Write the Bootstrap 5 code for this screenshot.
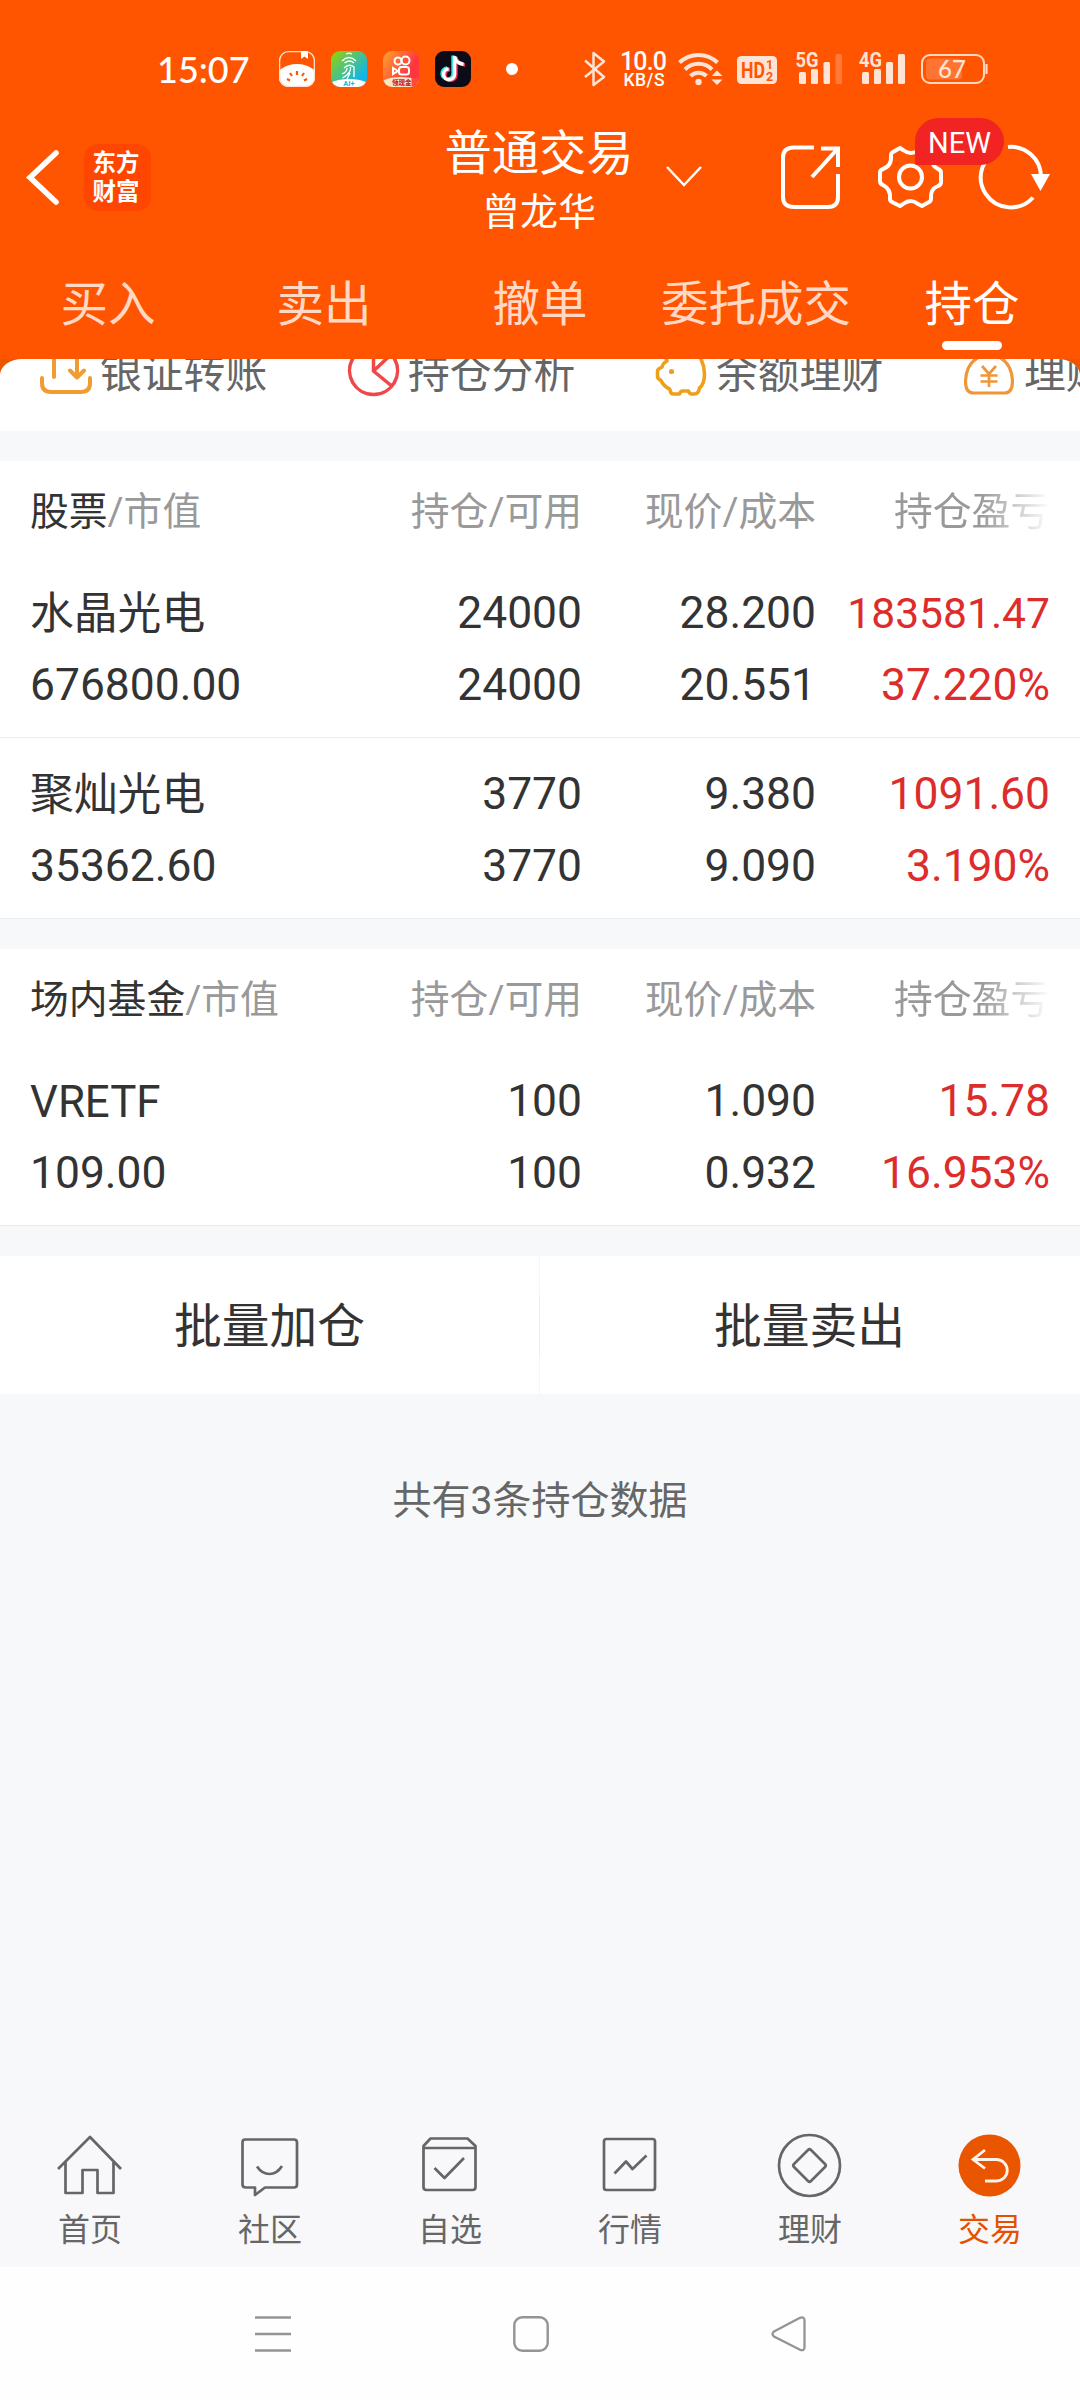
<!DOCTYPE html>
<html lang="zh-CN">
<head>
<meta charset="utf-8">
<meta name="viewport" content="width=device-width, initial-scale=1">
<title>普通交易 - 持仓</title>
<link href="https://cdn.jsdelivr.net/npm/bootstrap@5.3.0/dist/css/bootstrap.min.css" rel="stylesheet">
<style>
  body { width: 1080px; height: 2400px; margin: 0; overflow: hidden; background: #f7f8fa; color: #333;
         font-family: Roboto, "Noto Sans CJK SC", sans-serif; }
  svg { display: block; flex: none; overflow: visible; }
  .app-top { background: #ff5500; color: #fff; height: 359px; }
  .sys-bar { height: 110px; padding-top: 28px; }
  .sys-time { font: 500 36px/40px Lato, sans-serif; padding-left: 157px; width: 279px; }
  .title-bar { height: 134px; padding-left: 27px; }
  .brand { width: 67px; height: 67px; border-radius: 14px; background: #ff4600; margin-left: 25px; padding: 0 3px 3px 0;
           font: 700 23.5px/29px "Noto Sans CJK SC", sans-serif; }
  .title-main { font-size: 47.3px; line-height: 58px; }
  .title-sub { font-size: 38px; line-height: 58px; }
  .title-box { width: 190px; margin-left: 293px; margin-top: 12px; }
  .gap-chev { margin-left: 32px; }
  .gap-share { margin-left: 79px; }
  .gap-gear { margin-left: 36px; }
  .gap-refresh { margin-left: 35px; }
  .new-badge { left: 38px; top: -27px; width: 89px; height: 47px; border-radius: 24px 24px 24px 2px;
               background: #f22323; font-size: 29px; line-height: 50px; }
  .trade-tabs { height: 115px; }
  .trade-tabs .nav-item { width: 216px; }
  .trade-tabs .nav-link { color: #ffd9c6; font-size: 47.5px; line-height: 60px; padding: 31px 0 0; height: 115px; position: relative; border-radius: 0; }
  .trade-tabs .nav-link.active { color: #fff; background: none; }
  .trade-tabs .active::after { content: ""; position: absolute; left: 78px; top: 97px; width: 60px; height: 9px; border-radius: 5px; background: #fff; }
  .strip-back { background: #ea5500; height: 72px; overflow: hidden; }
  .strip { background: #fff; height: 72px; border-radius: 22px 22px 0 0 / 16px 16px 0 0; padding-left: 40px; overflow: hidden; }
  .quick { width: 308px; flex: none; height: 40px; font-size: 41.8px; line-height: 29px; color: #666; white-space: nowrap; }
  .quick svg { margin-right: -1px; }
  .holdings { background: #fff; margin-top: 30px; }
  .hold-head { height: 96px; padding: 6px 29px 0 30px; font-size: 38.8px; color: #999; }
  .head-strong { color: #333; }
  .hold-row { height: 181px; padding: 20px 30px 0 30px; border-bottom: 1px solid #ececee; font-size: 44.4px; line-height: 72px; }
  .c-name { width: 281px; white-space: nowrap; }
  .c-qty { width: 271px; text-align: right; }
  .c-price { width: 234px; text-align: right; }
  .c-gain { width: 234px; text-align: right; color: #dd2c2c; }
  .nm { font-size: 43.8px; position: relative; top: 1px; }
  .long { font-size: 42.6px; }
  .fade-head { width: 157px; margin-left: 78px; white-space: nowrap; overflow: hidden;
    -webkit-mask-image: linear-gradient(90deg, #000 55%, transparent 100%); mask-image: linear-gradient(90deg, #000 55%, transparent 100%); }
  .batch { background: #fff; height: 138px; margin-top: 30px; font-size: 47.8px; }
  .batch-btn { line-height: 143px; width: 539px; }
  .v-rule { width: 1px; background: linear-gradient(#f6f6f6 39px, #ebebeb 39px, #ebebeb 99px, #f6f6f6 99px); }
  .total { font-size: 39px; line-height: 60px; color: #666; margin-top: 77px; }
  .dock { height: 150px; color: #666; background: #f8f8fb; font-size: 32px; line-height: 40px; }
  .dock svg { margin: 12px auto 9px; }
  .dock .on { color: #e65100; }
  .sys-nav { height: 133px; background: #fefefe; padding-left: 255px; gap: 222px; }
  .ln { fill: none; stroke: currentColor; stroke-width: 2.7; stroke-linejoin: round; }
</style>
</head>
<body class="d-flex flex-column">

<header class="app-top flex-shrink-0">
  <div class="sys-bar d-flex align-items-center">
    <div class="sys-time">15:07</div>
    <svg width="720" height="50" viewBox="279 44 720 50">
      <defs>
        <linearGradient id="g1" x1="0" y1="0" x2="1" y2="1"><stop offset=".1" stop-color="#86cf1c"/><stop offset=".8" stop-color="#10b5ee"/></linearGradient>
        <linearGradient id="g2" x1="0" y1="0" x2="1" y2=".6"><stop offset="0" stop-color="#ffa52c"/><stop offset=".8" stop-color="#ff3540"/></linearGradient>
        <clipPath id="k1"><rect x="279" y="51" width="36" height="36" rx="9"/></clipPath>
        <clipPath id="k2"><rect x="331" y="51" width="36" height="36" rx="9"/></clipPath>
        <clipPath id="k3"><rect x="383" y="51" width="36" height="36" rx="9"/></clipPath>
      </defs>
      <g clip-path="url(#k1)"><ellipse cx="297" cy="80" rx="22" ry="16" fill="#fff"/><rect x="279.5" y="51.5" width="35" height="35" rx="9" fill="none" stroke="#ffe0d0" stroke-width="1.6"/>
        <path d="M301 51h7v8l-3.500-2.500-3.500 2.500z" fill="#fff"/>
        <path d="M297 71v4M290 73l2 3M304 73l-2 3M287 79l3 1.500M307 79l-3 1.500" stroke="#ff5500" stroke-width="2.200"/></g>
      <g clip-path="url(#k2)"><rect x="331" y="51" width="36" height="36" fill="url(#g1)"/>
        <g fill="none" stroke="#fff" stroke-width="1.300"><path d="M346 54q3-1.500 6 0M342 61q7-7 14 0M344.500 63q5-4 9.500 0M344 68q5-5 10-1v10M350.500 67q1 6-8 11M347 68q0 4-5 6M350 73l-3 6"/></g>
        <ellipse cx="349" cy="89" rx="24" ry="10" fill="#fff"/><text x="349" y="86" text-anchor="middle" font-size="7.500" font-weight="700" fill="#22b5d8">AI+</text></g>
      <g clip-path="url(#k3)"><rect x="383" y="51" width="36" height="36" fill="url(#g2)"/>
        <g fill="none" stroke="#fff" stroke-width="2"><circle cx="398" cy="61" r="3.500"/><circle cx="405.500" cy="60.500" r="4"/><rect x="399" y="67" width="10" height="7.500" rx="2.500"/><path d="M398 71l-5-3v6z"/></g>
        <ellipse cx="401" cy="88" rx="24" ry="11" fill="#fbe6c8"/><text x="392" y="85" font-size="6.500" font-weight="900" fill="#c6262a">领现金</text><path d="M411.500 78h8v10h-8z" fill="#ff4a38"/></g>
      <rect x="435" y="51" width="36" height="36" rx="9" fill="#0c0b18"/>
      <g fill="none" stroke-width="3.400"><path d="M454 56v18a5.500 5.500 0 1 1-6-5.500M454 56q1 7 9 8" stroke="#25e8e4" transform="translate(-1 -.5)"/><path d="M454 56v18a5.500 5.500 0 1 1-6-5.500M454 56q1 7 9 8" stroke="#f73059" transform="translate(2 1)"/><path d="M454 56v18a5.500 5.500 0 1 1-6-5.500M454 56q1 7 9 8" stroke="#fff" transform="translate(.6 .2)"/></g>
      <circle cx="512" cy="69" r="6" fill="#fff"/>
      <path d="M585 60.500L604 77l-10.500 8V53L604 61.500 585 77" fill="none" stroke="#ffe4d6" stroke-width="2.500" stroke-linejoin="round"/>
      <g fill="#fff" text-anchor="middle" font-family="Roboto, sans-serif" font-weight="500"><text x="643.500" y="69.500" font-size="25" textLength="47">10.0</text><text x="644" y="86" font-size="17.500" textLength="41">KB/S</text></g>
      <g fill="none" stroke="#ffe4d6" stroke-width="4"><path d="M679.500 62.500a27.500 27.500 0 0 1 38 0M685 69.500a19 19 0 0 1 27 0M690.500 76a11.500 11.500 0 0 1 16 0"/></g><circle cx="698.500" cy="82" r="3.200" fill="#ffe4d6"/>
      <path d="M711.500 76l5.500-5.500 5.500 5.500zM711.500 79.500l5.500 5.500 5.500-5.500z" fill="#ffe4d6"/>
      <rect x="737" y="56" width="40" height="28" rx="4.500" fill="#ffe4d6"/>
      <g fill="#ff5500" font-family="Roboto, sans-serif" font-weight="700"><text x="741" y="78" font-size="22" textLength="24" lengthAdjust="spacingAndGlyphs">HD</text><text x="766" y="69" font-size="12.500">1</text><text x="766" y="80.500" font-size="12.500">2</text></g>
      <g fill="#ffe4d6" font-family="Roboto, sans-serif" font-weight="700" font-size="20"><text x="795.500" y="67" textLength="23" lengthAdjust="spacingAndGlyphs">5G</text><text x="859" y="67" textLength="23" lengthAdjust="spacingAndGlyphs">4G</text></g>
      <g fill="#ffe4d6"><rect x="799" y="72" width="7" height="12" rx="1.500"/><rect x="811" y="69" width="7" height="15" rx="1.500"/><rect x="823.500" y="62" width="6.500" height="22" rx="1.500"/><rect x="835.500" y="54" width="6.500" height="30" rx="1.500" fill="#ff7a3a"/>
        <rect x="862" y="72" width="7" height="12" rx="1.500"/><rect x="874" y="69" width="7" height="15" rx="1.500"/><rect x="886" y="62" width="7" height="22" rx="1.500"/><rect x="898" y="54" width="7" height="30" rx="1.500"/></g>
      <rect x="922" y="55" width="62" height="28" rx="8" fill="none" stroke="#ffd9c4" stroke-width="2"/><rect x="926" y="58.500" width="36" height="21" rx="4" fill="#ff7432"/><path d="M986.500 64v10" stroke="#ffd9c4" stroke-width="2.200"/>
      <text x="952" y="78" text-anchor="middle" font-family="Lato, sans-serif" font-size="24" font-weight="500" fill="#ffe4d6">67</text>
    </svg>
  </div>

  <div class="title-bar d-flex align-items-center">
    <svg width="32" height="54" viewBox="27 150 32 54"><path d="M56 153L30 177.500 56 202" fill="none" stroke="#fff" stroke-width="5.500" stroke-linecap="round"/></svg>
    <div class="brand text-center d-flex flex-column justify-content-center"><span>东方</span><span>财富</span></div>
    <div class="title-box text-center text-nowrap">
      <div class="title-main">普通交易</div>
      <div class="title-sub">曾龙华</div>
    </div>
    <svg class="gap-chev" width="36" height="22" viewBox="666 166 36 22"><path d="M667 167l17 18 17-18" fill="none" stroke="#fff" stroke-width="2.500"/></svg>
    <svg class="gap-share" width="60" height="64" viewBox="780 145 60 64"><g fill="none" stroke="#fff" stroke-width="4"><path d="M813 147.500h-20q-11 0-11 10V197q0 10 11 10h34q10 0 10-10V174"/><path d="M820 148.500h17V167M836 149.500L811 177" stroke-linejoin="miter"/></g></svg>
    <div class="position-relative gap-gear">
      <svg width="67" height="64" viewBox="877 145 67 64"><g fill="none" stroke="#fff" stroke-width="4" stroke-linejoin="round"><path d="M900 148l-7 4q-2 1-2 3 1 11-8 14-3 1-3 4v8q0 3 3 4 8 4 7 14 0 2 2 3l8 4 3-2q8-6 15 0l4 2 7-4q2-1 2-3-1-10 7-13 3-1 3-4v-9q0-3-3-4-8-4-7-14 0-2-2-3l-7-4-3 2q-8 6-16 0z"/><circle cx="910.500" cy="177" r="11.500"/></g></svg>
      <span class="new-badge position-absolute text-center">NEW</span>
    </div>
    <svg class="gap-refresh" width="71" height="64" viewBox="979 145 71 64"><path d="M1008 147A30 30 0 0 1 1041 176M1001 149A30 30 0 1 0 1033 197.500" fill="none" stroke="#fff" stroke-width="4"/><path d="M1031 174h19l-9.500 17z" fill="#fff"/></svg>
  </div>

  <ul class="nav trade-tabs flex-nowrap text-center">
    <li class="nav-item"><a class="nav-link">买入</a></li>
    <li class="nav-item"><a class="nav-link">卖出</a></li>
    <li class="nav-item"><a class="nav-link">撤单</a></li>
    <li class="nav-item"><a class="nav-link text-nowrap">委托成交</a></li>
    <li class="nav-item"><a class="nav-link active">持仓</a></li>
  </ul>
</header>

<main class="flex-grow-1">
  <div class="strip-back"><div class="strip d-flex">
    <div class="quick d-flex"><svg width="61" height="40" viewBox="40 359 61 40"><path d="M42 378v5q0 9 9 9h30q9 0 9-9v-5M54 359v18M77 359v17M70 370.500l7 7 7-7" fill="none" stroke="#f09c33" stroke-width="4" stroke-linecap="round" stroke-linejoin="round"/></svg><span>银证转账</span></div>
    <div class="quick d-flex"><svg width="61" height="40" viewBox="348 359 61 40"><path d="M373.500 346.500a24 24 0 1 0 .1 0zM373.500 346v25l17 14M373.500 371l16-15" fill="none" stroke="#f04848" stroke-width="3.500"/></svg><span>持仓分析</span></div>
    <div class="quick d-flex"><svg width="61" height="40" viewBox="656 359 61 40"><path d="M662 345L667 361q-4 2-5 6l-3.500 2q-1 1-1 3v4q0 3 3 4 4 7 9 9l1 2q0 3 3 3h6q1-3 3-3h6q1 3 3 3h3q4 0 5-6 5-4 5-14 0-8-4-16" fill="none" stroke="#efa01a" stroke-width="3.600" stroke-linejoin="round"/><circle cx="671.500" cy="371.500" r="2.600" fill="#efa01a"/></svg><span>余额理财</span></div>
    <div class="quick d-flex"><svg width="61" height="40" viewBox="964 359 61 40"><g fill="none" stroke="#ef9638" stroke-width="3.200"><path d="M979 357q-13 7-13.500 24 0 12 8 12h31q8 0 8-12-.5-17-13.500-24"/><path d="M982 366l7 8 7-8M989 374v13M980.500 375.500h17M980.500 381.500h17" stroke-width="2.700"/></g></svg><span>理财</span></div>
  </div></div>

  <section class="holdings">
    <div class="hold-head d-flex align-items-center"><div class="c-name"><span class="head-strong">股票</span>/市值</div><div class="c-qty">持仓/可用</div><div class="c-price">现价/成本</div><div class="fade-head">持仓盈亏</div></div>
    <div class="hold-row d-flex">
      <div class="c-name"><div class="nm">水晶光电</div><div>676800.00</div></div>
      <div class="c-qty"><div>24000</div><div>24000</div></div>
      <div class="c-price"><div>28.200</div><div>20.551</div></div>
      <div class="c-gain"><div class="long">183581.47</div><div>37.220%</div></div>
    </div>
    <div class="hold-row d-flex">
      <div class="c-name"><div class="nm">聚灿光电</div><div>35362.60</div></div>
      <div class="c-qty"><div>3770</div><div>3770</div></div>
      <div class="c-price"><div>9.380</div><div>9.090</div></div>
      <div class="c-gain"><div>1091.60</div><div>3.190%</div></div>
    </div>
  </section>

  <section class="holdings">
    <div class="hold-head d-flex align-items-center"><div class="c-name"><span class="head-strong">场内基金</span>/市值</div><div class="c-qty">持仓/可用</div><div class="c-price">现价/成本</div><div class="fade-head">持仓盈亏</div></div>
    <div class="hold-row d-flex">
      <div class="c-name"><div class="nm">VRETF</div><div>109.00</div></div>
      <div class="c-qty"><div>100</div><div>100</div></div>
      <div class="c-price"><div>1.090</div><div>0.932</div></div>
      <div class="c-gain"><div>15.78</div><div>16.953%</div></div>
    </div>
  </section>

  <div class="batch d-flex text-center"><div class="batch-btn">批量加仓</div><div class="v-rule"></div><div class="batch-btn">批量卖出</div></div>
  <div class="total text-center">共有3条持仓数据</div>
</main>

<nav class="dock d-flex text-center flex-shrink-0">
  <div class="col"><svg width="72" height="72" viewBox="54 2129 72 72"><path class="ln" d="M58 2169l32-32 31 32M65.500 2162v31h17v-23h15v23h16v-31"/></svg>首页</div>
  <div class="col"><svg width="72" height="72" viewBox="234 2129 72 72"><path class="ln" d="M245 2139.500h49q3 0 3 3v42q0 3-3 3h-29l-10 7.500v-7.500h-9q-3.500 0-3.500-3v-42q0-3 2.500-3zM257 2166.500q5 7.500 12.500 7.500t12.500-8"/></svg>社区</div>
  <div class="col"><svg width="72" height="72" viewBox="414 2129 72 72"><path class="ln" d="M423.500 2148h52v39q0 3-3 3h-46q-3 0-3-3zv-2l7-7.500h37l8 7.500v2M434.500 2168l10 10 19.500-20"/></svg>自选</div>
  <div class="col"><svg width="72" height="72" viewBox="594 2129 72 72"><rect class="ln" x="604" y="2139" width="51" height="51" rx="2.500"/><path class="ln" d="M614.500 2173.500l11.500-12 6.500 7.500 14-13.500"/></svg>行情</div>
  <div class="col"><svg width="72" height="72" viewBox="774 2129 72 72"><circle class="ln" cx="809.500" cy="2165.500" r="30.500"/><path class="ln" d="M808 2150q1.500-1.500 3 0l14 14q1.500 1.500 0 3l-14 14q-1.500 1.500-3 0l-14-14q-1.500-1.500 0-3z"/></svg>理财</div>
  <div class="col on"><svg width="72" height="72" viewBox="954 2129 72 72"><circle cx="989.500" cy="2165.500" r="31" fill="#ea5500"/><path d="M985 2150l-12 9.500 12 9M973 2159.500h23.500a10.700 10.700 0 0 1 0 21.500H985" fill="none" stroke="#fff3ea" stroke-width="2.800"/></svg>交易</div>
</nav>

<div class="sys-nav d-flex align-items-center flex-shrink-0">
  <svg width="36" height="36" viewBox="0 0 36 36"><path d="M0 1.500h36M0 18h36M0 34.500h36" stroke="#949494" stroke-width="2.600"/></svg>
  <svg width="36" height="36" viewBox="0 0 36 36"><rect x="1.300" y="1.300" width="33.400" height="33.400" rx="8" fill="none" stroke="#949494" stroke-width="2.400"/></svg>
  <svg width="36" height="36" viewBox="0 0 36 36"><path d="M3 15.500L29 1.800q4.500-1.500 4.500 2.500v27q0 4-4.500 2.500L3 20.500q-3-2.500 0-5z" fill="none" stroke="#949494" stroke-width="2.300"/></svg>
</div>

<script src="https://cdn.jsdelivr.net/npm/bootstrap@5.3.0/dist/js/bootstrap.bundle.min.js"></script>
</body>
</html>
